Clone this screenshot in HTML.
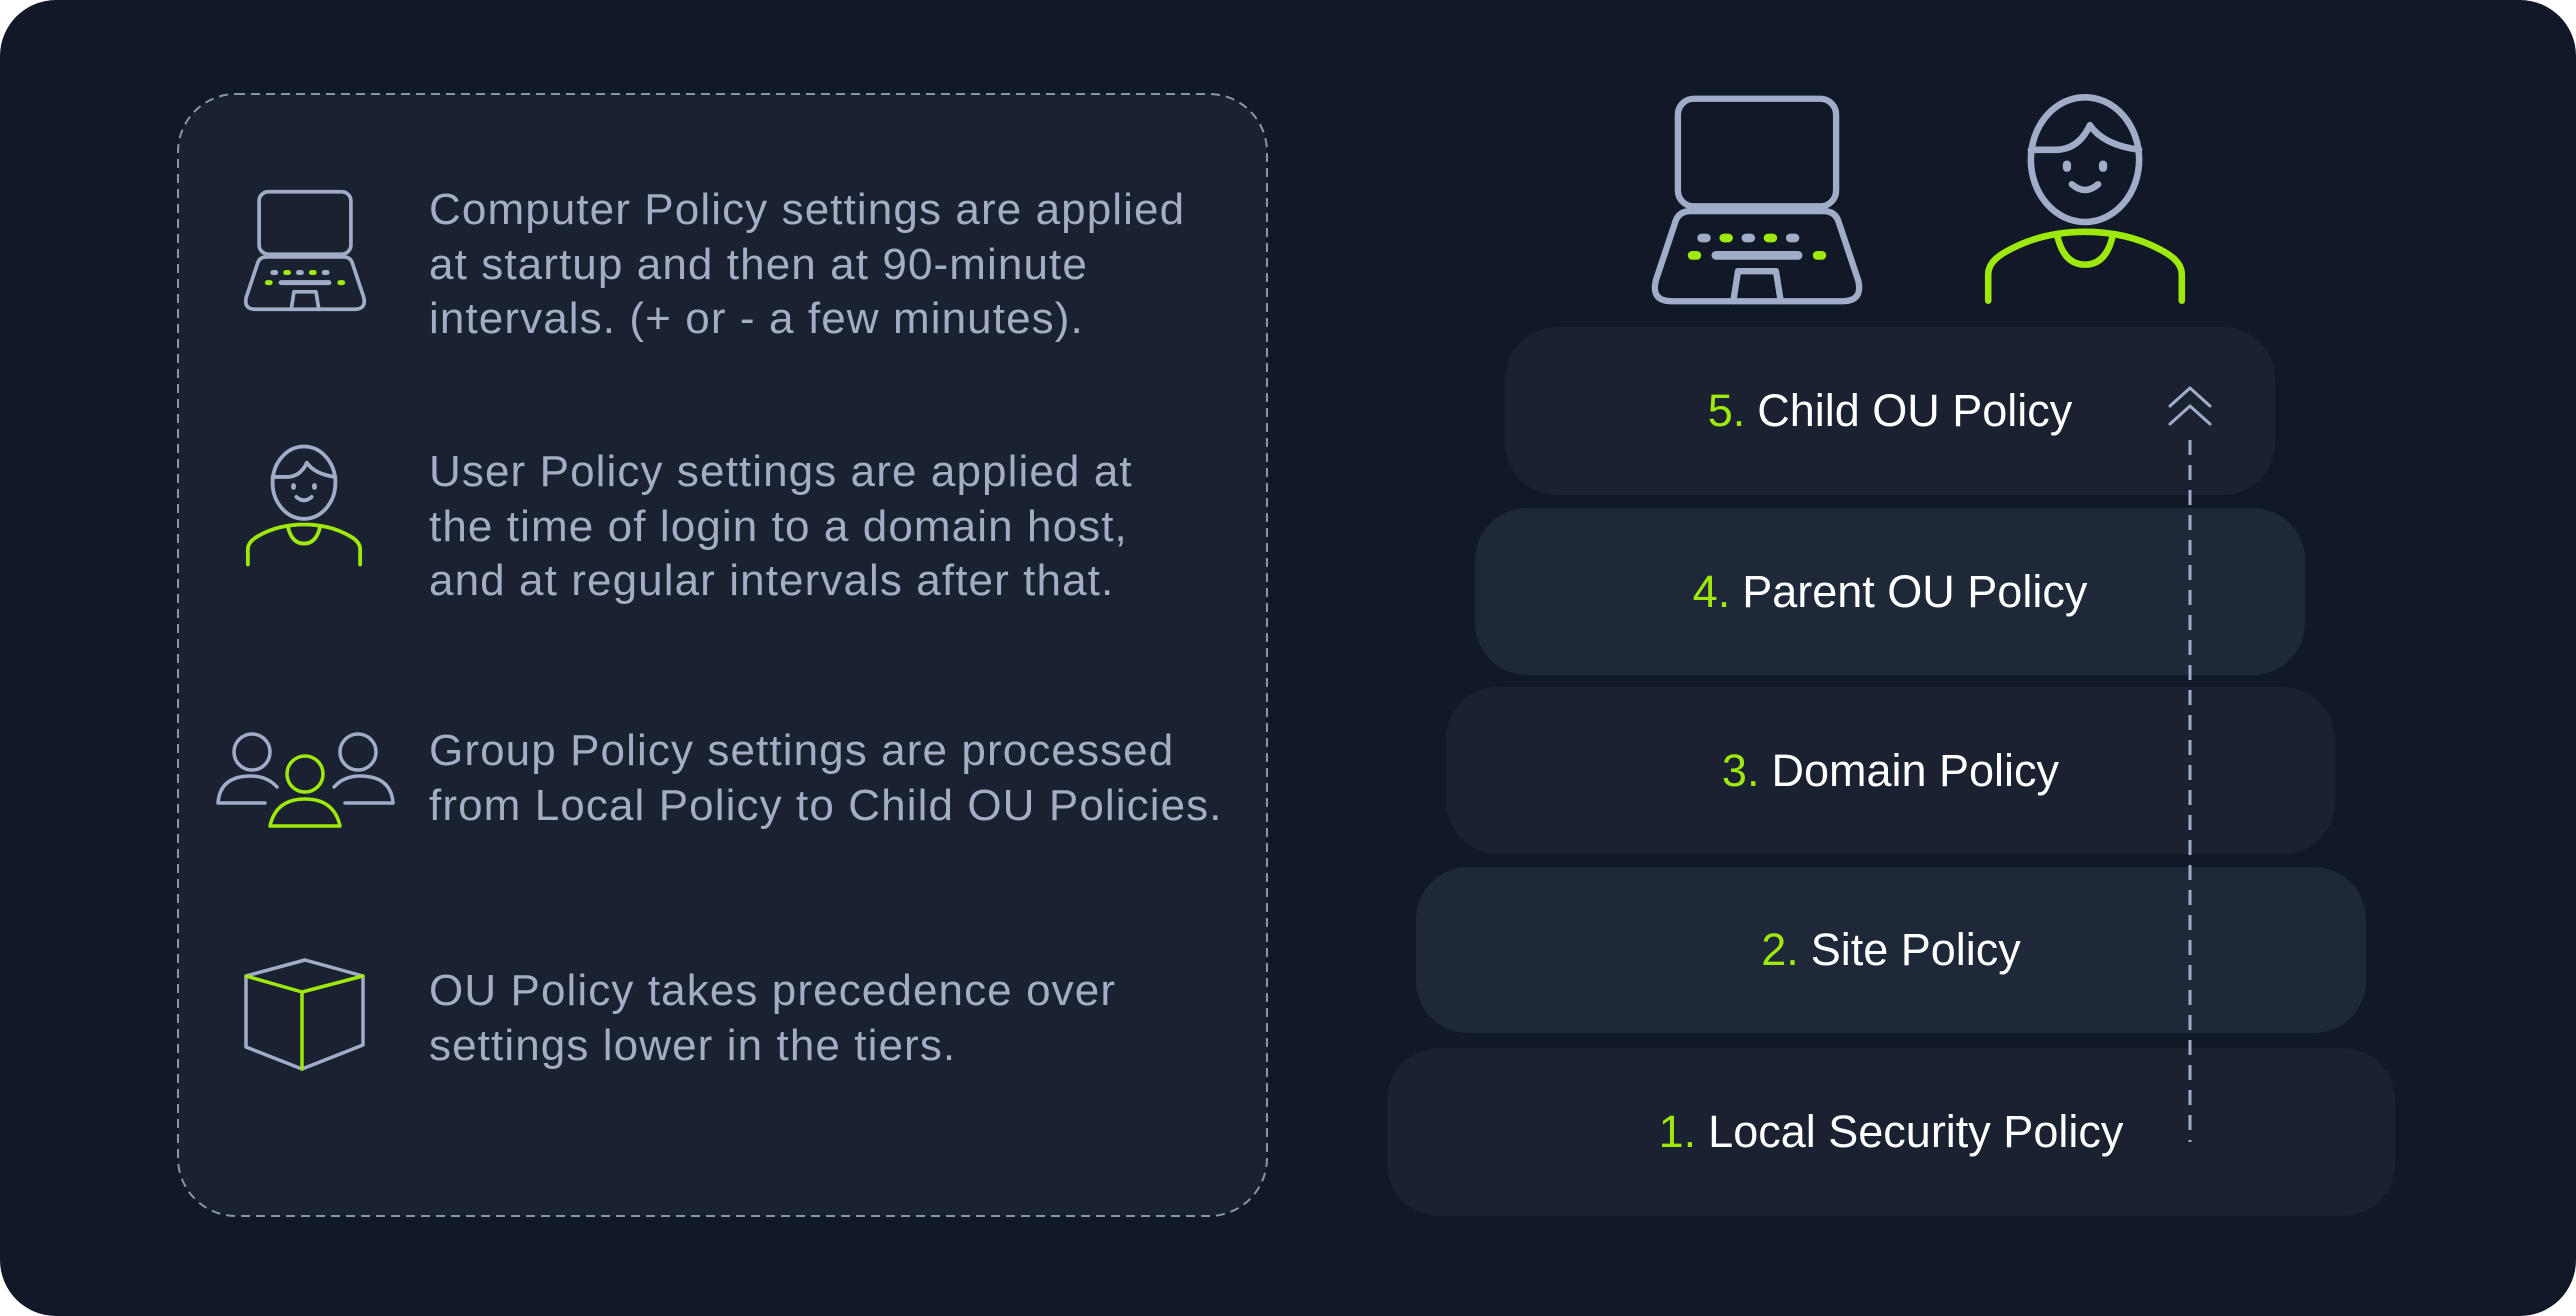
<!DOCTYPE html>
<html><head><meta charset="utf-8"><style>
html,body{margin:0;padding:0;background:#fff;}
body{width:2576px;height:1316px;position:relative;overflow:hidden;font-family:"Liberation Sans",sans-serif;}
.bg{position:absolute;left:0;top:0;width:2576px;height:1316px;background:#111827;border-radius:56px;}
.t{position:absolute;left:429px;color:#a3adc4;font-size:44px;line-height:54.5px;white-space:nowrap;letter-spacing:1.1px;}
.tier{position:absolute;border-radius:52px;display:flex;align-items:center;justify-content:center;color:#fff;font-size:45px;white-space:nowrap;}
.tier b{color:#9ee80c;font-weight:normal;margin-right:12px;}
.a{background:#1a2231}.b{background:#1f2839}
</style></head><body>
<div class="bg"></div>
<svg style="position:absolute;left:0;top:0" width="2576" height="1316">
<rect x="178" y="94" width="1089" height="1122" rx="58" fill="#1a2231" stroke="#8a93a8" stroke-width="2" stroke-dasharray="9 6"/>
</svg>
<div class="tier a" style="left:1505px;top:327px;width:770px;height:168px"><b>5.</b>Child OU Policy</div>
<div class="tier b" style="left:1475px;top:508px;width:830px;height:167px"><b>4.</b>Parent OU Policy</div>
<div class="tier a" style="left:1446px;top:687px;width:889px;height:167px"><b>3.</b>Domain Policy</div>
<div class="tier b" style="left:1416px;top:867px;width:950px;height:166px"><b>2.</b>Site Policy</div>
<div class="tier a" style="left:1387px;top:1048px;width:1008px;height:168px"><b>1.</b>Local Security Policy</div>

<div class="t" style="top:183px">Computer Policy settings are applied<br>at startup and then at 90-minute<br>intervals. (+ or - a few minutes).</div>
<div class="t" style="top:445px">User Policy settings are applied at<br>the time of login to a domain host,<br>and at regular intervals after that.</div>
<div class="t" style="top:724px">Group Policy settings are processed<br>from Local Policy to Child OU Policies.</div>
<div class="t" style="top:964px">OU Policy takes precedence over<br>settings lower in the tiers.</div>

<svg style="position:absolute;left:0;top:0" width="2576" height="1316" fill="none" stroke-linecap="round" stroke-linejoin="round">
<defs>
<g id="lap">
<rect x="20" y="3" width="100" height="68" rx="10" stroke="#a1adc8" stroke-width="4"/>
<path d="M28 74 H112 Q120 74 122 82 L134 118 Q137 131 124 131 H16 Q3 131 6 118 L18 82 Q20 74 28 74 Z" stroke="#a1adc8" stroke-width="4"/>
<path d="M55 131 L58 112 H82 L85 131" stroke="#a1adc8" stroke-width="4"/>
<g stroke-width="5.5">
<path d="M35 91h3" stroke="#a1adc8"/><path d="M49 91h3" stroke="#9ee80c"/><path d="M63 91h3" stroke="#a1adc8"/><path d="M77 91h3" stroke="#9ee80c"/><path d="M91 91h3" stroke="#a1adc8"/>
<path d="M29 102h3" stroke="#9ee80c"/><path d="M44 102h52" stroke="#a1adc8"/><path d="M108 102h3" stroke="#9ee80c"/>
</g>
</g>
<g id="usr">
<ellipse cx="62" cy="40" rx="33" ry="38" stroke="#a1adc8" stroke-width="4"/>
<path d="M29 34 H44 Q58 34 65 19 Q73 31 95 34" stroke="#a1adc8" stroke-width="4"/>
<path d="M51 43v2M73 43v2" stroke="#a1adc8" stroke-width="5"/>
<path d="M54 55 Q62 62 70 55" stroke="#a1adc8" stroke-width="4"/>
<path d="M3 126 V110 Q3 102 14 96 Q35 84 62 84 Q89 84 110 96 Q121 102 121 110 V126" stroke="#9ee80c" stroke-width="4"/>
<path d="M45 86 Q49 104 62 104 Q75 104 79 86" stroke="#9ee80c" stroke-width="4"/>
</g>
</defs>
<svg x="1646" y="94" width="222" height="212" viewBox="0 0 140 134"><use href="#lap"/></svg>
<svg x="1983" y="94" width="204" height="210" viewBox="0 0 124 128"><use href="#usr"/></svg>
<svg x="240" y="189" width="130" height="123" viewBox="0 0 140 134"><use href="#lap"/></svg>
<svg x="245" y="444" width="118" height="123" viewBox="0 0 124 128"><use href="#usr"/></svg>
<g stroke-width="3.5">
<circle cx="252" cy="752" r="18" stroke="#a1adc8"/>
<path d="M265 803 H218 Q220 776 251 776 Q267 776 277 787" stroke="#a1adc8"/>
<circle cx="358" cy="752" r="18" stroke="#a1adc8"/>
<path d="M345 803 H393 Q391 776 360 776 Q344 776 334 787" stroke="#a1adc8"/>
<circle cx="305" cy="774" r="18" stroke="#9ee80c"/>
<path d="M270 826 Q276 799 305 799 Q334 799 340 826 Z" stroke="#9ee80c"/>
<path d="M246 976 L305 960 L363 976 V1045 L302 1069 L246 1047 Z" stroke="#a1adc8"/>
<path d="M246 976 L302 992 L363 976 M302 992 V1069" stroke="#9ee80c"/>
</g>
<path d="M2190 440 V1142" stroke="#a1adc8" stroke-width="3" stroke-dasharray="15 10" stroke-linecap="butt"/>
<path d="M2170 406 L2190 388 L2210 406 M2170 424 L2190 406 L2210 424" stroke="#a1adc8" stroke-width="3"/>
</svg>
</body></html>
